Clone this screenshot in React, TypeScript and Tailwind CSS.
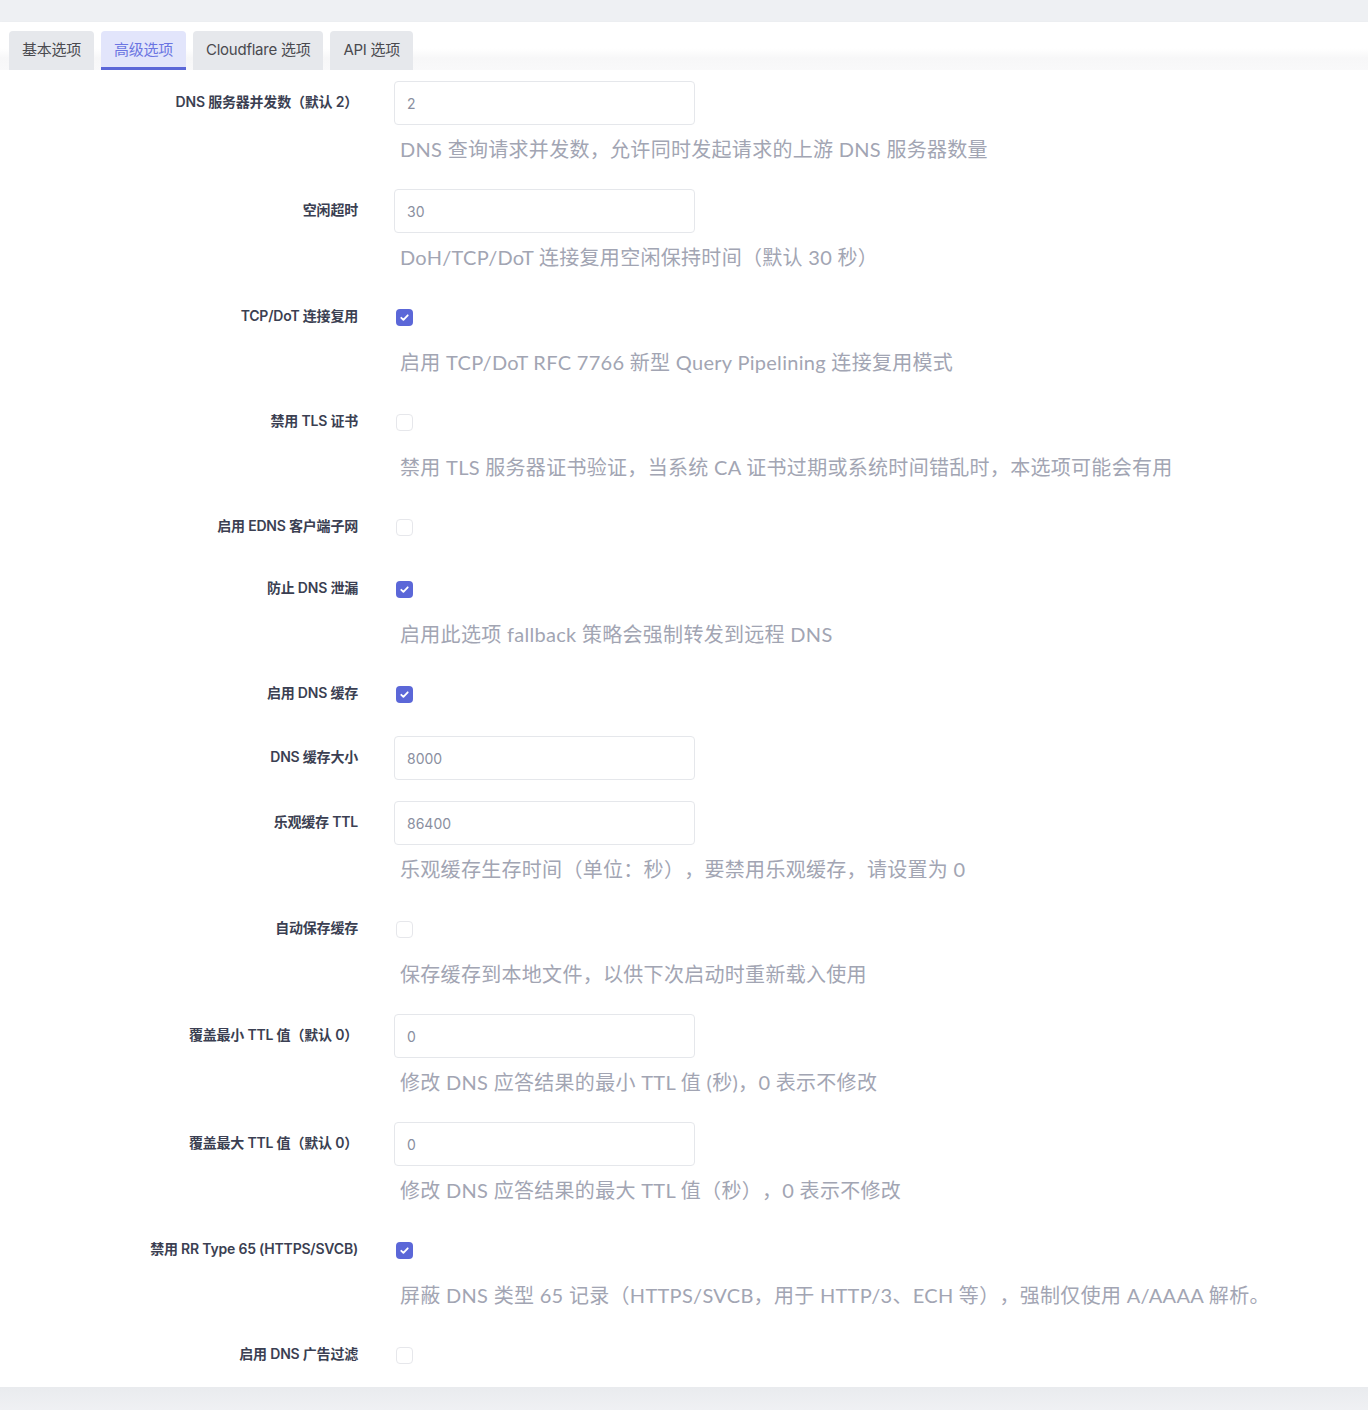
import React from "react";

type Row =
  | { kind: "input"; label: string; value: string; desc?: string }
  | { kind: "check"; label: string; checked: boolean; desc?: string };

const rows: Row[] = [
  { kind: "input", label: "DNS 服务器并发数（默认 2）", value: "2", desc: "DNS 查询请求并发数，允许同时发起请求的上游 DNS 服务器数量" },
  { kind: "input", label: "空闲超时", value: "30", desc: "DoH/TCP/DoT 连接复用空闲保持时间（默认 30 秒）" },
  { kind: "check", label: "TCP/DoT 连接复用", checked: true, desc: "启用 TCP/DoT RFC 7766 新型 Query Pipelining 连接复用模式" },
  { kind: "check", label: "禁用 TLS 证书", checked: false, desc: "禁用 TLS 服务器证书验证，当系统 CA 证书过期或系统时间错乱时，本选项可能会有用" },
  { kind: "check", label: "启用 EDNS 客户端子网", checked: false },
  { kind: "check", label: "防止 DNS 泄漏", checked: true, desc: "启用此选项 fallback 策略会强制转发到远程 DNS" },
  { kind: "check", label: "启用 DNS 缓存", checked: true },
  { kind: "input", label: "DNS 缓存大小", value: "8000" },
  { kind: "input", label: "乐观缓存 TTL", value: "86400", desc: "乐观缓存生存时间（单位：秒），要禁用乐观缓存，请设置为 0" },
  { kind: "check", label: "自动保存缓存", checked: false, desc: "保存缓存到本地文件，以供下次启动时重新载入使用" },
  { kind: "input", label: "覆盖最小 TTL 值（默认 0）", value: "0", desc: "修改 DNS 应答结果的最小 TTL 值 (秒)，0 表示不修改" },
  { kind: "input", label: "覆盖最大 TTL 值（默认 0）", value: "0", desc: "修改 DNS 应答结果的最大 TTL 值（秒），0 表示不修改" },
  { kind: "check", label: "禁用 RR Type 65 (HTTPS/SVCB)", checked: true, desc: "屏蔽 DNS 类型 65 记录（HTTPS/SVCB，用于 HTTP/3、ECH 等），强制仅使用 A/AAAA 解析。" },
  { kind: "check", label: "启用 DNS 广告过滤", checked: false },
];

function Checkbox({ checked }: { checked: boolean }) {
  if (checked) {
    return (
      <span className="ml-[2px] flex h-[17px] w-[17px] items-center justify-center rounded-[4px] bg-[#5b67d8]">
        <svg width="11" height="11" viewBox="0 0 12 12" fill="none">
          <path d="M2.5 6.3l2.3 2.3L9.5 3.6" stroke="#fff" strokeWidth="2" strokeLinecap="round" strokeLinejoin="round" />
        </svg>
      </span>
    );
  }
  return <span className="ml-[2px] block h-[17px] w-[17px] rounded-[4px] border border-[#e6e7eb] bg-white" />;
}

const tabBase = "flex h-[39px] items-center rounded-t-[4px] px-[13px] text-[15px] tracking-[-0.25px]";

export default function App() {
  const font = { fontFamily: 'Inter, "Noto Sans CJK SC", "Noto Sans", sans-serif' };
  const descFont = { fontFamily: 'Lato, "Noto Sans CJK SC", "Noto Sans", sans-serif' };
  return (
    <div className="min-h-[1410px] bg-[#eff0f3] [text-spacing-trim:space-all]" style={font}>
      <div className="h-[22px] bg-[#eef0f3]" />
      <div className="bg-white shadow-[0_1px_3px_rgba(0,0,0,0.05)]">
        <div className="flex gap-[7px] bg-[linear-gradient(to_bottom,#ffffff_0%,#ffffff_55%,#f7f7f8_75%,#f9f9fa_100%)] px-[9px] pt-[9px]">
          <div className={`${tabBase} bg-[#e6e8ec] text-[#4a4a4f]`}>基本选项</div>
          <div className={`${tabBase} relative bg-[#e2e5fb] text-[#6b75e2]`}>
            高级选项
            <span className="absolute bottom-0 left-0 right-0 h-[3px] bg-[#5b67d8]" />
          </div>
          <div className={`${tabBase} bg-[#e6e8ec] text-[#4a4a4f]`}>Cloudflare 选项</div>
          <div className={`${tabBase} bg-[#e6e8ec] text-[#4a4a4f]`}>API 选项</div>
        </div>
        <div className="flex flex-col gap-[21px] pt-[11px] pb-[11px]">
          {rows.map((r, i) => (
            <div key={i} className="flex flex-col">
              <div className={`flex items-center ${r.kind === "input" ? "h-[44px]" : "h-[41px]"}`}>
                <div className="w-[358px] shrink-0 pb-[4px] text-right text-[14px] font-semibold tracking-[-0.2px] text-[#3b3f52]">{r.label}</div>
                <div className="ml-[36px] flex items-center">
                  {r.kind === "input" ? (
                    <input
                      readOnly
                      value={r.value}
                      className="h-[44px] w-[301px] rounded-[4px] border border-[#e5e7eb] bg-white px-[12px] text-[14px] text-[#8a8fa0] outline-none"
                    />
                  ) : (
                    <Checkbox checked={r.checked} />
                  )}
                </div>
              </div>
              {r.desc && (
                <div
                  className="h-[43px] pl-[400px] pt-[6px] text-[20px] leading-[36px] tracking-[0.3px] text-[#a2a5b3]"
                  style={descFont}
                >
                  {r.desc}
                </div>
              )}
            </div>
          ))}
        </div>
      </div>
      <div className="h-[25px] bg-[linear-gradient(to_bottom,#e9ebee,#f0f1f4)]" />
    </div>
  );
}
